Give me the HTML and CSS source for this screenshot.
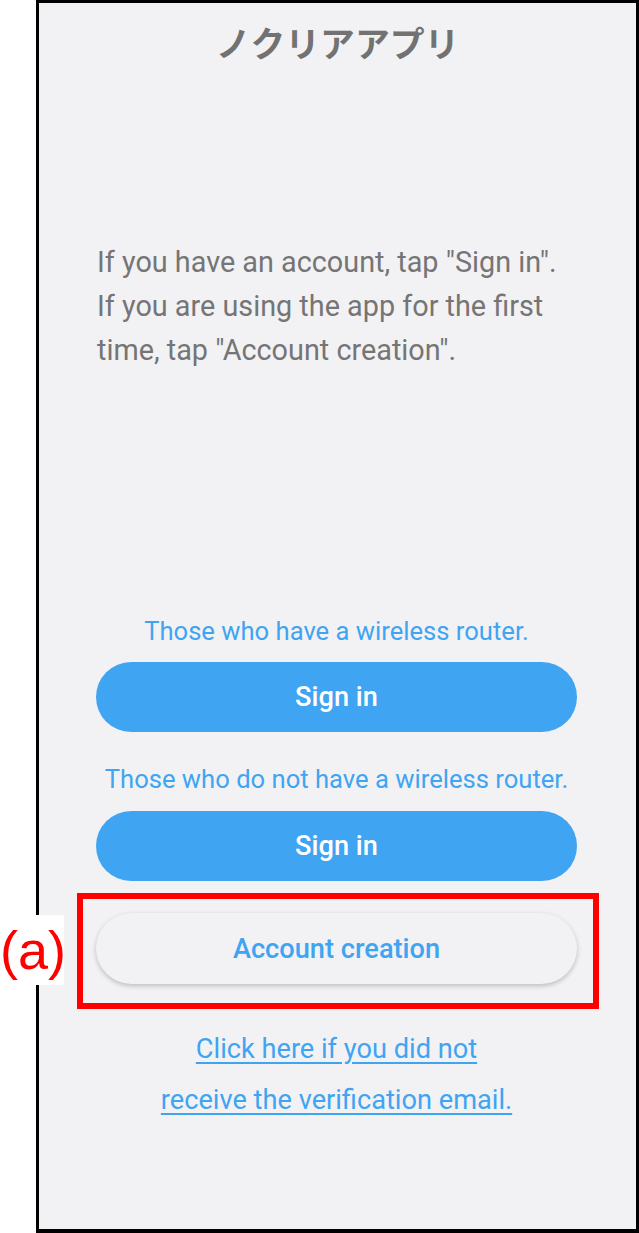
FILE: index.html
```html
<!DOCTYPE html>
<html lang="en">
<head>
<meta charset="utf-8">
<title>ノクリアアプリ</title>
<link rel="stylesheet" href="styles.css">
</head>
<body>
<div class="page">
  <div class="phone">
    <h1 class="title">ノクリアアプリ</h1>
    <p class="intro">If you have an account, tap "Sign in".<br>If you are using the app for the first<br>time, tap "Account creation".</p>
    <div class="actions">
      <p class="hint">Those who have a wireless router.</p>
      <button class="btn btn-primary">Sign in</button>
      <p class="hint hint-second">Those who do not have a wireless router.</p>
      <button class="btn btn-primary btn-after-hint">Sign in</button>
      <button class="btn btn-secondary">Account creation</button>
      <a class="resend" href="#">Click here if you did not<br>receive the verification email.</a>
    </div>
  </div>
  <div class="highlight"></div>
  <div class="label">(a)</div>
</div>
</body>
</html>
```
FILE: styles.css
```css
html, body {
  margin: 0;
  padding: 0;
  background: #ffffff;
}

.page {
  position: relative;
  width: 639px;
  height: 1233px;
}

.phone {
  box-sizing: border-box;
  margin-left: 36px;
  width: 603px;
  height: 1233px;
  border: 3px solid #000;
  border-bottom-width: 4px;
  background: #f2f2f4;
  display: flex;
  flex-direction: column;
  font-family: Roboto, "Noto Sans", sans-serif;
}

.title {
  margin: 0;
  padding-top: 15px;
  text-align: center;
  font-family: "Noto Sans CJK JP", sans-serif;
  font-weight: 700;
  font-size: 34.8px;
  line-height: 48px;
  color: #727272;
}

.intro {
  margin: 174px 0 0 58px;
  font-size: 28.8px;
  line-height: 44px;
  color: #757575;
}

.actions {
  margin-top: 244px;
  margin-right: 2px;
  display: flex;
  flex-direction: column;
  align-items: center;
}

.hint {
  margin: 0;
  font-size: 25.6px;
  line-height: 30px;
  color: #3fa4f2;
  text-align: center;
}

.hint-second {
  margin-top: 32px;
}

.btn {
  box-sizing: border-box;
  width: 481px;
  height: 70px;
  border: none;
  border-radius: 36px;
  font-family: Roboto, sans-serif;
  font-weight: 500;
  font-size: 27.2px;
  padding: 0;
  margin-top: 16px;
}

.btn-after-hint {
  margin-top: 17px;
}

.btn-primary {
  background: #3fa4f2;
  color: #ffffff;
}

.btn-secondary {
  margin-top: 32px;
  height: 71px;
  background: #f2f2f4;
  color: #3fa4f2;
  box-shadow: 0 2px 5px rgba(0, 0, 0, 0.22);
}

.resend {
  margin-top: 40px;
  text-align: center;
  font-size: 27.2px;
  line-height: 51px;
  color: #3fa4f2;
  text-decoration: underline;
  text-underline-offset: 4px;
}

.highlight {
  position: absolute;
  left: 77px;
  top: 893px;
  width: 522px;
  height: 116px;
  box-sizing: border-box;
  border: 6px solid #ff0000;
}

.label {
  position: absolute;
  left: 0;
  top: 915px;
  width: 64px;
  height: 70px;
  background: #ffffff;
  color: #ff0000;
  font-family: "Liberation Sans", Arial, sans-serif;
  font-size: 54px;
  line-height: 70px;
  text-align: center;
}
```
